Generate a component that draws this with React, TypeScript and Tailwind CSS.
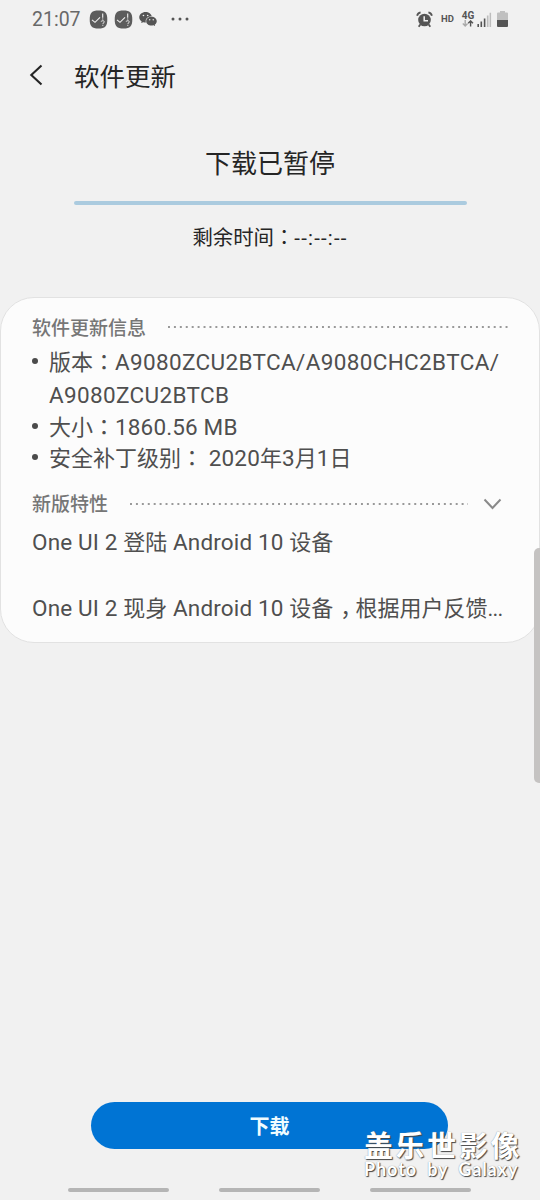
import type { ReactNode } from "react";
import { AiFillWechat } from "react-icons/ai";

// full-width colon that sits in the middle of its box
function Colon() {
  return (
    <span lang="zh-TW" className="font-['Noto_Sans_CJK_TC',sans-serif] leading-0">
      ：
    </span>
  );
}

function Latin({ children }: { children: ReactNode }) {
  return <span className="text-[22.5px] leading-0 tracking-[0.15px]">{children}</span>;
}

function Code({ children }: { children: ReactNode }) {
  return <span className="text-[22.5px] leading-0 tracking-[0.35px]">{children}</span>;
}

function NoticeIcon() {
  return (
    <svg width="19" height="19" viewBox="0 0 19 19" fill="none">
      <path
        d="M9.5.5c6.6 0 8.8 2.2 8.8 9s-2.2 9-8.8 9-8.8-2.2-8.8-9 2.2-9 8.8-9z"
        fill="#5c5c5c"
      />
      <path d="M3 9.8 6 12.3l5-4.9" stroke="#f1f1f1" strokeWidth="1.1" />
      <path d="M13.7 3.5v4.2M13.7 8.4v1" stroke="#f1f1f1" strokeWidth="1.1" />
      <path
        d="M12.1 11.7c.2-1.4 3.3-1.2 3.2.2 0 1-1.5 1-1.5 2.1M13.8 14.8v1"
        stroke="#f1f1f1"
        strokeWidth="1"
      />
    </svg>
  );
}

function AlarmIcon() {
  return (
    <svg width="17" height="17" viewBox="0 0 17 17" fill="none">
      <circle cx="8.5" cy="9" r="6.3" fill="#555" />
      <path
        d="M1.1 4.7C1.5 3 2.7 1.8 4.6 1.4M15.9 4.7C15.5 3 14.3 1.8 12.4 1.4M4.3 13.5l-1.6 2.2M12.7 13.5l1.6 2.2"
        stroke="#555"
        strokeWidth="1.8"
      />
      <path d="M8.2 5.2v4.6H12" stroke="#f1f1f1" strokeWidth="1.5" />
    </svg>
  );
}

function NetworkIcon() {
  return (
    <div className="flex w-[14px] flex-col items-center">
      <span className="text-[10px] leading-[9px] font-bold">4G</span>
      <svg width="12" height="7" viewBox="0 0 12 7" fill="none" strokeWidth="1.4">
        <path d="M3.2 0v6M.8 3.6 3.2 6l2.4-2.4" stroke="#aaa" />
        <path d="M8.6 6.5V1M6.2 3.2 8.6.9 11 3.2" stroke="#555" />
      </svg>
    </div>
  );
}

function SignalIcon() {
  return (
    <svg width="15" height="15" viewBox="0 0 15 15">
      <path d="M.4 12H2v3H.4zM3.500 9.500h1.600V15H3.500zM6.800 6.500h1.600V15H6.800z" fill="#555" />
      <path d="M9.900 3.500h1.600V15H9.900zM12.600.7h1.500V15h-1.500z" fill="#bdbdbd" />
    </svg>
  );
}

function BatteryIcon() {
  return (
    <svg width="11" height="16" viewBox="0 0 11 16">
      <path d="M3 0h5v1.600h2q1 0 1 1V9H0V2.600q0-1 1-1h2z" fill="#c0c0c0" />
      <path d="M0 9h11v6q0 1-1 1H1q-1 0-1-1z" fill="#555" />
    </svg>
  );
}

function StatusBar() {
  return (
    <div className="flex h-[38px] items-center px-8 text-[#555]">
      <span className="w-[57px] pt-[2px] text-[19.5px] text-[#686868]">21:07</span>
      <div className="flex items-center gap-[6px]">
        <NoticeIcon />
        <NoticeIcon />
        <AiFillWechat className="-ml-px h-[20px] w-[20px]" />
      </div>
      <svg className="ml-[13px]" width="18" height="4" viewBox="0 0 18 4" fill="#555">
        <circle cx="2" cy="2" r="1.5" />
        <circle cx="9" cy="2" r="1.5" />
        <circle cx="16" cy="2" r="1.5" />
      </svg>
      <div className="ml-auto flex items-center">
        <AlarmIcon />
        <span className="mr-[7px] ml-[8px] text-[9.5px] font-bold">HD</span>
        <NetworkIcon />
        <span className="ml-[2px]">
          <SignalIcon />
        </span>
        <span className="ml-[5px]">
          <BatteryIcon />
        </span>
      </div>
    </div>
  );
}

function Dots() {
  return (
    <div className="h-[2px] flex-1 bg-[radial-gradient(circle_at_1px_1px,#999_0.9px,transparent_1.3px)] bg-[length:5.93px_2px]" />
  );
}

function Item({ children }: { children: ReactNode }) {
  return (
    <li className="group flex">
      <span className="mt-[11px] mr-[11px] h-[6px] w-[6px] shrink-0 rounded-full bg-[#4b4b4b] group-first:mt-[12px]" />
      <span>{children}</span>
    </li>
  );
}

export default function App() {
  return (
    <div className="relative flex h-[1200px] w-[540px] flex-col overflow-hidden bg-[#f1f1f1] font-[Roboto,'Noto_Sans_CJK_SC',sans-serif] whitespace-nowrap text-[#252525]">
      <StatusBar />

      <header className="flex h-[76px] items-center pl-[29px]">
        <svg className="mb-[2px]" width="15" height="22" viewBox="0 0 15 22" fill="none">
          <path d="M12.5 1.5 2.3 11l10.2 9.5" stroke="#252525" strokeWidth="2.1" />
        </svg>
        <h1 className="ml-[30px] pt-[2px] text-[25.5px]">软件更新</h1>
      </header>

      <section className="mt-[25px] flex flex-col items-center">
        <h2 className="h-12 pt-px text-[26px] leading-12">下载已暂停</h2>
        <div className="mt-[14px] h-1 w-[393px] rounded-full bg-[#abcbdf]" />
        <p className="mt-4 h-8 pt-px text-[20.4px] leading-8">
          剩余时间
          <Colon />
          <span className="tracking-[1.2px]">--:--:--</span>
        </p>
      </section>

      <section className="mt-11 h-[346px] rounded-[34px] border border-[#e2e2e2] bg-[#fcfcfc] px-[31px] pt-[13px] text-[22px] text-[#4f4f4f]">
        <div className="flex h-8 items-center gap-[22px]">
          <h3 className="pt-[4px] text-[19px] font-medium text-[#767676]">软件更新信息</h3>
          <Dots />
        </div>
        <ul className="mt-[3px] leading-[31px]">
          <Item>
            <span className="block leading-[33px]">
              版本
              <Colon />
              <Code>A9080ZCU2BTCA/A9080CHC2BTCA/</Code>
              <br />
              <Code>A9080ZCU2BTCB</Code>
            </span>
          </Item>
          <Item>
            大小
            <Colon />
            <Latin>1860.56 MB</Latin>
          </Item>
          <Item>
            安全补丁级别
            <Colon />
            <Latin> 2020</Latin>年<Latin>3</Latin>月<Latin>1</Latin>日
          </Item>
        </ul>

        <div className="mt-[14px] flex h-8 items-center">
          <h3 className="mr-[22px] pt-[3px] text-[19px] font-medium text-[#767676]">新版特性</h3>
          <Dots />
          <svg className="mr-[6px] ml-[15px]" width="19" height="12" viewBox="0 0 19 12" fill="none">
            <path d="m1.5 1.5 8 8.5 8-8.5" stroke="#8a8a8a" strokeWidth="2" />
          </svg>
        </div>
        <p className="mt-[6px] leading-[33px]">
          <Latin>One UI 2 </Latin>登陆<Latin> Android 10 </Latin>设备
        </p>
        <p className="mt-[33px] leading-[33px]">
          <Latin>One UI 2 </Latin>现身<Latin> Android 10 </Latin>设备
          <span className="pl-[7px] tracking-[-7px]">，</span>根据用户反馈
          <span className="tracking-[-0.7px]">...</span>
        </p>
      </section>

      <footer className="mt-auto flex flex-col items-center pr-px pb-[8px]">
        <button className="h-[47px] w-[357px] rounded-full bg-[#0074d4] pt-[2px] text-[20px] font-bold text-[#f0fcff]">
          下载
        </button>
        <div className="mt-[39px] flex gap-[50px]">
          <span className="h-[4px] w-[101px] rounded-full bg-[#b5b5b5]" />
          <span className="h-[4px] w-[101px] rounded-full bg-[#b5b5b5]" />
          <span className="h-[4px] w-[101px] rounded-full bg-[#b5b5b5]" />
        </div>
      </footer>

      <div className="absolute top-[548px] right-0 h-[235px] w-[6px] rounded-l-[5px] bg-[#c5c3c2]" />

      {/* watermark */}
      <div className="absolute top-[1133px] left-[364px] text-white [text-shadow:1px_1px_1px_#444,0_0_1px_#888]">
        <div className="text-[29px] leading-[28px] font-bold tracking-[2.6px]">盖乐世影像</div>
        <div className="font-[Lato,sans-serif] text-[18px] leading-[17px] font-bold tracking-[0.9px] [word-spacing:5px]">
          Photo by Galaxy
        </div>
      </div>
    </div>
  );
}
